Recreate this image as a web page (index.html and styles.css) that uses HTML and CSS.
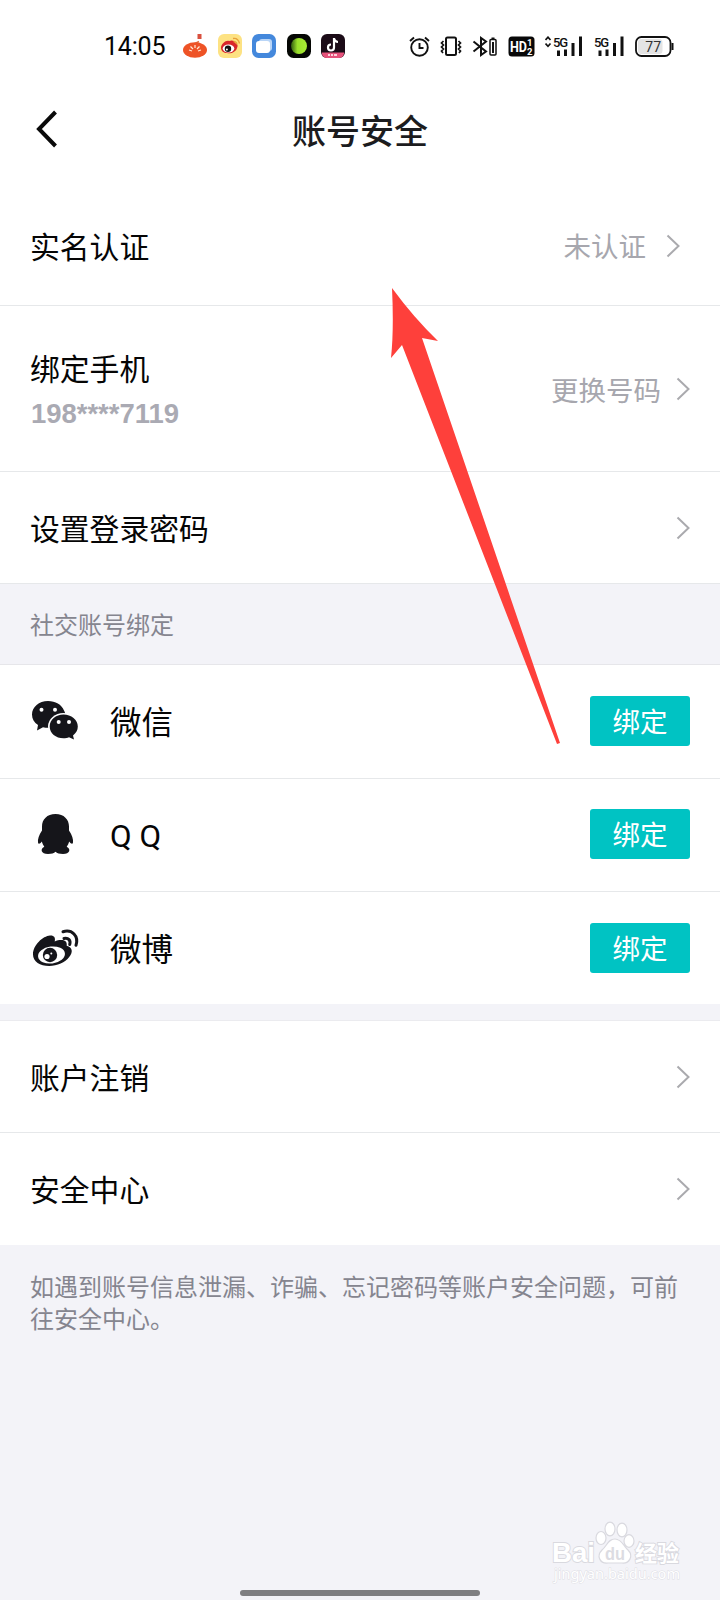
FILE: index.html
```html
<!DOCTYPE html>
<html lang="zh-CN">
<head>
<meta charset="utf-8">
<title>账号安全</title>
<link rel="stylesheet" href="styles.css">
</head>
<body>
<div class="screen">
  <div class="status">
    <span class="clock">14:05</span>
    <div class="apps">
      <svg width="24" height="24" viewBox="0 0 24 24"><rect x="14.500" y="0" width="4" height="5" fill="#d9503f"/><path d="M12 9.500l4-2" stroke="#d9703f" stroke-width="1.500"/><ellipse cx="12" cy="16" rx="12" ry="7.800" fill="#ee5326"/><path d="M6 16l3 1M7.500 12.500l2.500 2.500M12 11v3M16.500 12.500L14 15M18 16l-3 1" stroke="#ffe9d5" stroke-width="1.200"/></svg>
      <svg width="24" height="24" viewBox="0 0 24 24"><rect width="24" height="24" rx="6" fill="#fde283"/><path d="M3 14C3 10 8 6 11 7c2-1 6-1 6 2 3 1 3 3 2 5-1 4-6 6-10 5-3 0-6-2-6-5z" fill="#d9262b"/><ellipse cx="10.500" cy="14.500" rx="5.800" ry="4" fill="#fff"/><circle cx="10" cy="14.700" r="3.200" fill="#151515"/><circle cx="8.900" cy="15.500" r="1" fill="#fff"/><path d="M15 4.500q5-1 6.500 5M15.500 7.500q3 0 3.500 3" fill="none" stroke="#e8a13a" stroke-width="1.400"/></svg>
      <svg width="24" height="24" viewBox="0 0 24 24"><rect width="24" height="24" rx="6.500" fill="#4488dc"/><rect x="7" y="5" width="13" height="12" rx="3" fill="#b9d5f7"/><rect x="4" y="7" width="14" height="12" rx="3" fill="#fff"/></svg>
      <svg width="24" height="24" viewBox="0 0 24 24"><defs><linearGradient id="lime"><stop offset="0" stop-color="#315b10"/><stop offset=".4" stop-color="#9adf2b"/><stop offset="1" stop-color="#a8ee35"/></linearGradient></defs><rect width="24" height="24" rx="6.500" fill="#050704"/><circle cx="12" cy="12" r="8" fill="url(#lime)"/></svg>
      <svg width="24" height="24" viewBox="0 0 24 24"><rect width="24" height="24" rx="6" fill="#1b0b17"/><path d="M13 4v9.500a3 3 0 1 1-3-3M13 4.500q1 3.500 4 3.500" fill="none" stroke="#fff" stroke-width="2.200"/><path d="M1 18.500h22v1q-1 4.500-5 4.500H6q-4 0-5-4z" fill="#e6527b"/><path d="M7 21h2m1 0h2m1 0h3" stroke="#ffd0dc" stroke-width="2"/></svg>
    </div>
    <div class="signals">
      <svg width="21" height="21" viewBox="0 0 21 21" fill="none" stroke="#111" stroke-width="1.900"><circle cx="10.500" cy="11.500" r="8.300"/><path d="M10.500 7v5h4M1 5l4-3.500M20 5l-4-3.500"/></svg>
      <svg width="22" height="21" viewBox="0 0 22 21" fill="none" stroke="#111"><rect x="6" y="1.500" width="10" height="17.500" rx="1.500" stroke-width="2"/><path d="M3.500 5L1.500 7l2 2-2 2 2 2-2 2 1.500 2M18.500 5l2 2-2 2 2 2-2 2 2 2-1.500 2" stroke-width="1.700"/></svg>
      <svg width="26" height="21" viewBox="0 0 26 21" fill="none" stroke="#111" stroke-width="2"><path d="M1.500 5.500l12.500 10L9 19V2l5 3.500L1.500 15.500"/><rect x="18" y="3.500" width="6" height="15.500" rx="1" stroke-width="1.500"/><path d="M21 6v11" stroke-width="2"/><path d="M19.500 2.500h3"/></svg>
      <svg width="27" height="21" viewBox="0 0 27 21"><rect x=".5" y=".5" width="26" height="20" rx="3.500" fill="#080808"/><text x="2" y="15.500" class="hd" textLength="17" lengthAdjust="spacingAndGlyphs">HD</text><text x="19" y="10" class="hd-num">1</text><text x="19" y="18.500" class="hd-num">2</text></svg>
      <svg width="39" height="21" viewBox="0 0 39 21"><path d="M.5 4l2.500-2.800L5.500 4M.5 7.500L3 10.300l2.500-2.800" fill="none" stroke="#111" stroke-width="1.700"/><text x="8" y="10.500" class="net" textLength="15">5G</text><path d="M13.500 14.500V20M20.500 13.500V20M28 7v13M35.500 .5V20" stroke="#111" stroke-width="3"/></svg>
      <svg width="31" height="21" viewBox="0 0 31 21"><text x="0" y="10.500" class="net" textLength="15">5G</text><path d="M6 14.500V20M13 13.500V20M20.500 7v13M28 .5V20" stroke="#111" stroke-width="3"/></svg>
      <svg width="39" height="21" viewBox="0 0 39 21"><rect x="1" y="1" width="34.500" height="19" rx="5.500" fill="#fff" stroke="#111" stroke-width="1.800"/><rect x="3" y="3" width="24.500" height="15" rx="3.500" fill="#e4e4e4"/><path d="M37.500 7v7" stroke="#111" stroke-width="2"/><text x="18.200" y="15.500" class="level" text-anchor="middle">77</text></svg>
    </div>
  </div>

  <div class="header">
    <svg class="back" width="22" height="38" viewBox="0 0 22 38"><path d="M19.500 2L3 19l16.500 17" fill="none" stroke="#0a0a0a" stroke-width="4"/></svg>
    <h1 class="title">账号安全</h1>
  </div>

  <div class="row row-verify">
    <span class="label">实名认证</span>
    <span class="value">未认证</span>
    <svg class="chevron" width="14" height="24" viewBox="0 0 14 24"><path d="M1.500 1.500L12.500 12l-11 10.500"/></svg>
  </div>
  <div class="row row-phone">
    <div class="stack">
      <span class="label">绑定手机</span>
      <span class="phone">198****7119</span>
    </div>
    <span class="value">更换号码</span>
    <svg class="chevron" width="14" height="24" viewBox="0 0 14 24"><path d="M1.500 1.500L12.500 12l-11 10.500"/></svg>
  </div>
  <div class="row row-password">
    <span class="label">设置登录密码</span>
    <svg class="chevron" width="14" height="24" viewBox="0 0 14 24"><path d="M1.500 1.500L12.500 12l-11 10.500"/></svg>
  </div>

  <div class="section">社交账号绑定</div>

  <div class="row row-social row-first">
    <svg class="logo" width="50" height="44" viewBox="0 0 50 44"><path d="M18 2C9 2 2 8 2 15.500c0 4.500 2.200 8 6 10.500L7 31.500l6-3.300c3 .8 6 .8 8 .3 15-2 16-12 13-17C31.500 5.500 25.500 2 18 2z" fill="#15151a"/><ellipse cx="33.500" cy="27.500" rx="15.500" ry="13.500" fill="#fff"/><path d="M33.500 15.500c-7.700 0-13.800 5.300-13.800 12s6.100 11.800 13.800 11.800c2 0 4-.3 5.500-1l5 2.200-1-4c3-2.500 4.800-5.200 4.800-9 0-6.700-6.600-12-14.300-12z" fill="#15151a"/><g fill="#fff"><circle cx="11.500" cy="10.800" r="2"/><circle cx="25" cy="10.800" r="2"/><circle cx="28.700" cy="23" r="2"/><circle cx="39" cy="23" r="2"/></g></svg>
    <span class="name">微信</span>
    <button class="bind">绑定</button>
  </div>
  <div class="row row-social">
    <svg class="logo" width="50" height="44" viewBox="0 0 50 44"><path d="M25.500 2C17 2 12 7.500 12 14.500v4c-3 4.500-4.500 9-4 12 .3 2 2 1.500 3.800-1 .5 2 1.300 3.700 2.500 5.200-4.500 2-3.300 7.300 3.700 7.300 3.500 0 6-1 7.500-2.300C27 41 29.500 42 33 42c7 0 8.200-5.300 3.700-7.300 1.200-1.500 2-3.200 2.500-5.200 1.800 2.500 3.500 3 3.800 1 .5-3-1-7.500-4-12v-4C39 7.500 34 2 25.500 2z" fill="#15151a"/></svg>
    <span class="name">Q Q</span>
    <button class="bind">绑定</button>
  </div>
  <div class="row row-social row-last">
    <svg class="logo" width="50" height="44" viewBox="0 0 50 44"><path d="M3 28.500C3 19 13 10 20 9.500c4-.3 5.700 2 4.700 6 6-2.500 13-2 12 4.300 6 1.500 6.500 6.500 2.500 11.200-4 5.500-12 9-20 9C10 40 3 35.500 3 28.500z" fill="#15151a"/><ellipse cx="21.500" cy="29" rx="13.500" ry="8.500" fill="#fff" transform="rotate(-7 21.500 29)"/><circle cx="20" cy="29" r="7.200" fill="#15151a"/><circle cx="17" cy="30.500" r="2.600" fill="#fff"/><circle cx="21.300" cy="27.500" r="1" fill="#fff"/><path d="M33 5.700C42 3 49 10 46 19.300M34 12.500c4.500-1 7 2 5.700 6" fill="none" stroke="#15151a" stroke-width="3" stroke-linecap="round"/></svg>
    <span class="name">微博</span>
    <button class="bind">绑定</button>
  </div>

  <div class="gap"></div>

  <div class="row row-link">
    <span class="label">账户注销</span>
    <svg class="chevron" width="14" height="24" viewBox="0 0 14 24"><path d="M1.500 1.500L12.500 12l-11 10.500"/></svg>
  </div>
  <div class="row row-link row-last">
    <span class="label">安全中心</span>
    <svg class="chevron" width="14" height="24" viewBox="0 0 14 24"><path d="M1.500 1.500L12.500 12l-11 10.500"/></svg>
  </div>

  <p class="note">如遇到账号信息泄漏、诈骗、忘记密码等账户安全问题，可前往安全中心。</p>

  <svg class="pointer" width="180" height="464" viewBox="385 284 180 464"><path d="M392 288Q414 318 438 341L422 338L560 743L557 744L402 345L391 358Q394 330 392 288z" fill="#fe403b"/></svg>

  <svg class="watermark" width="140" height="70" viewBox="545 1517 140 70">
    <g fill="#fff" stroke="#d9d9df" stroke-width="1.200">
      <ellipse cx="601" cy="1538" rx="5" ry="6.500"/><ellipse cx="610" cy="1529" rx="5" ry="6.800"/><ellipse cx="622" cy="1530" rx="5" ry="6.800"/><ellipse cx="629" cy="1541" rx="5" ry="6.300"/>
      <path d="M615 1539c7 0 9 8 13 11 6 6 1 14-6 13h-14c-8 1-12-7-6-13 5-4 6-11 13-11z"/>
    </g>
    <text x="552" y="1562" class="wm-main" textLength="43" lengthAdjust="spacingAndGlyphs">Bai</text>
    <text x="605" y="1560" class="wm-du" textLength="20" lengthAdjust="spacingAndGlyphs">du</text>
    <text x="635" y="1560.500" class="wm-cn" textLength="44">经验</text>
    <text x="554" y="1579" class="wm-url" textLength="126" lengthAdjust="spacingAndGlyphs">jingyan.baidu.com</text>
  </svg>
  <div class="home"></div>
</div>
</body>
</html>
```

FILE: styles.css
```css
* { box-sizing: border-box; }
body { margin: 0; }
.screen {
  position: relative;
  width: 720px;
  height: 1600px;
  overflow: hidden;
  background: #f3f3f8;
  color: #050505;
  font-family: Roboto, "Noto Sans CJK SC", sans-serif;
}
svg { display: block; flex: none; }

.status {
  display: flex;
  align-items: center;
  height: 92px;
  padding-left: 104px;
  background: #fff;
}
.clock { width: 79px; font-size: 25px; font-weight: 400; letter-spacing: -0.2px; white-space: nowrap; }
.apps { display: flex; gap: 10.600px; }
.signals { display: flex; gap: 10px; margin-left: 63.600px; }
.hd { font: 700 14.500px Roboto, sans-serif; fill: #fff; }
.hd-num { font: 700 9.500px Roboto, sans-serif; fill: #fff; }
.net { font: 500 13px Roboto, sans-serif; fill: #111; }
.level { font: 14px Roboto, sans-serif; fill: #333; }

.header {
  display: flex;
  align-items: center;
  height: 97px;
  padding: 0 36px 19px;
  background: #fff;
}
.back { margin-top: -4px; }
.title {
  flex: 1;
  margin: 0 22px 0 0;
  padding-top: 2px;
  text-align: center;
  font-size: 34px;
  font-weight: 500;
  line-height: 50px;
  color: #1c1c1e;
}

.row {
  display: flex;
  align-items: center;
  padding: 0 30px;
  background: #fff;
  border-bottom: 1px solid #e6e8ea;
}
.row-verify { height: 117px; padding-right: 40px; padding-bottom: 2px; }
.row-phone { height: 166px; }
.row-password { height: 112px; }
.row-social { height: 113px; padding-bottom: 2px; }
.row-first { height: 114px; }
.row-link { height: 112px; }
.row-last { height: 112px; padding-bottom: 0; border-bottom: 0; }
.label { padding-top: 4px; font-size: 29.800px; line-height: 44px; }
.stack { display: flex; flex-direction: column; padding-top: 4px; }
.stack .label { padding-top: 0; }
.phone {
  padding: 2px 0 0 1px;
  font: 700 28px/40px "Liberation Sans", Arial, sans-serif;
  color: #aaaab3;
  transform: scaleX(0.98);
  transform-origin: left;
}
.value { margin-left: auto; padding-top: 4px; font-size: 27.500px; line-height: 40px; color: #a7a7ae; }
.row-phone .value { padding-top: 6px; }
.chevron { margin-left: auto; fill: none; stroke: #aaaaae; stroke-width: 2; }
.value + .chevron { margin-left: 15px; }
.row-verify .value + .chevron { margin-left: 20px; }

.section {
  height: 81px;
  padding: 2px 0 0 30px;
  border-bottom: 1px solid #e6e6ea;
  font-size: 24px;
  line-height: 80px;
  color: #85858f;
}
.name { margin-left: 30px; padding-top: 6px; font-size: 31.500px; line-height: 46px; }
.bind {
  width: 100px;
  height: 50px;
  margin-left: auto;
  padding: 3px 0 0;
  border: 0;
  border-radius: 3px;
  background: #00c3c3;
  color: #fff;
  font: 27.500px/47px Roboto, "Noto Sans CJK SC", sans-serif;
}
.gap { height: 17px; border-bottom: 1px solid #ebebef; }
.note {
  margin: 0;
  padding: 27px 30px 0;
  font-size: 24px;
  line-height: 32px;
  color: #85858f;
}

.pointer { position: absolute; left: 385px; top: 284px; }
.watermark { position: absolute; left: 545px; top: 1517px; }
.wm-main, .wm-cn {
  fill: #fff;
  stroke: #d9d9df;
  stroke-width: 1.800px;
  paint-order: stroke;
}
.wm-main { font: 700 28px "Liberation Sans", sans-serif; }
.wm-cn { font: 700 22px "Noto Sans CJK SC", sans-serif; }
.wm-du { font: 700 19px "Liberation Sans", sans-serif; fill: #dcdce2; }
.wm-url { font: 15px "Noto Sans", sans-serif; fill: #fff; stroke: #dedee4; stroke-width: 1px; paint-order: stroke; }
.home {
  position: absolute;
  left: 240px;
  bottom: 4px;
  width: 240px;
  height: 6px;
  border-radius: 3px;
  background: #7e7e81;
}
```
